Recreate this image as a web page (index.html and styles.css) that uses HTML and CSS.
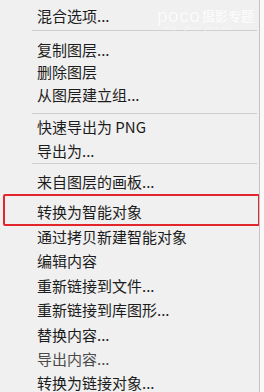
FILE: index.html
```html
<!DOCTYPE html>
<html lang="zh-CN">
<head>
<meta charset="utf-8">
<title>菜单</title>
<link rel="stylesheet" href="styles.css">
</head>
<body>
<div class="menu">
  <div class="watermark"><span class="wm-poco">poco</span><span class="wm-cn">摄影专题</span><span class="wm-url">http://photo.poco.cn/</span></div>
  <div class="item h22">混合选项...</div>
  <div class="sep sep1"></div>
  <div class="item h225">复制图层...</div>
  <div class="item h225">删除图层</div>
  <div class="item h225">从图层建立组...</div>
  <div class="sep sep2"></div>
  <div class="item h25">快速导出为 PNG</div>
  <div class="item h22">导出为...</div>
  <div class="sep sep3"></div>
  <div class="item h26">来自图层的画板...</div>
  <div class="item marked">转换为智能对象</div>
  <div class="item h245">通过拷贝新建智能对象</div>
  <div class="item h245">编辑内容</div>
  <div class="item h245">重新链接到文件...</div>
  <div class="item h245">重新链接到库图形...</div>
  <div class="item h245">替换内容...</div>
  <div class="item h245 dim">导出内容...</div>
  <div class="item last">转换为链接对象...</div>
</div>
</body>
</html>
```

FILE: styles.css
```css
html, body {
  margin: 0;
  padding: 0;
  background: #f9f9f9;
  overflow: hidden;
}
.menu {
  position: relative;
  width: 260px;
  height: 392px;
  box-sizing: border-box;
  padding-top: 4px;
  background: #f0f0f0;
  border-right: 1px solid #c4c4c4;
  display: flex;
  flex-direction: column;
  font-family: "Noto Sans CJK SC", "Noto Sans", sans-serif;
  font-size: 15px;
  color: #1c1c1c;
  overflow: hidden;
}
.item {
  flex: none;
  display: flex;
  align-items: center;
  padding-left: 37px;
  box-sizing: border-box;
  line-height: 1;
  white-space: nowrap;
}
.h22 { height: 22px; }
.h225 { height: 22.5px; }
.h25 { height: 25px; }
.h26 { height: 26px; }
.h245 { height: 24.5px; }
.last {
  height: 21px;
  align-items: flex-start;
  padding-top: 4px;
}
.dim { color: #4a4a4a; }
.marked {
  position: relative;
  height: 30px;
  padding-top: 4px;
}
.marked::after {
  content: "";
  position: absolute;
  left: 3px;
  right: -1px;
  top: 0;
  bottom: -2px;
  border: 2.5px solid #e3262b;
  border-radius: 2px;
}
.sep {
  flex: none;
  height: 1px;
  margin-left: 32px;
  margin-right: 2px;
  background: #cfcfcf;
}
.sep1 { margin-top: 4px; margin-bottom: 7px; }
.sep2 { margin-top: 7.5px; margin-bottom: 0; }
.sep3 { margin-top: 2px; margin-bottom: 4px; }
.watermark {
  position: absolute;
  left: 157px;
  top: 6px;
  width: 100px;
  height: 24px;
  color: #fbfbfb;
  text-shadow: 0 0 1px #e9e9e9;
}
.wm-poco {
  position: absolute;
  left: 0;
  top: 0;
  font-family: "Liberation Sans", sans-serif;
  font-size: 19px;
  line-height: 19px;
  letter-spacing: 0.5px;
}
.wm-cn {
  position: absolute;
  left: 45px;
  top: 2px;
  font-size: 13px;
  line-height: 15px;
  font-weight: bold;
}
.wm-url {
  position: absolute;
  left: 8px;
  top: 20px;
  font-family: "Liberation Sans", sans-serif;
  font-size: 5px;
  line-height: 5px;
  letter-spacing: 1px;
}
```
